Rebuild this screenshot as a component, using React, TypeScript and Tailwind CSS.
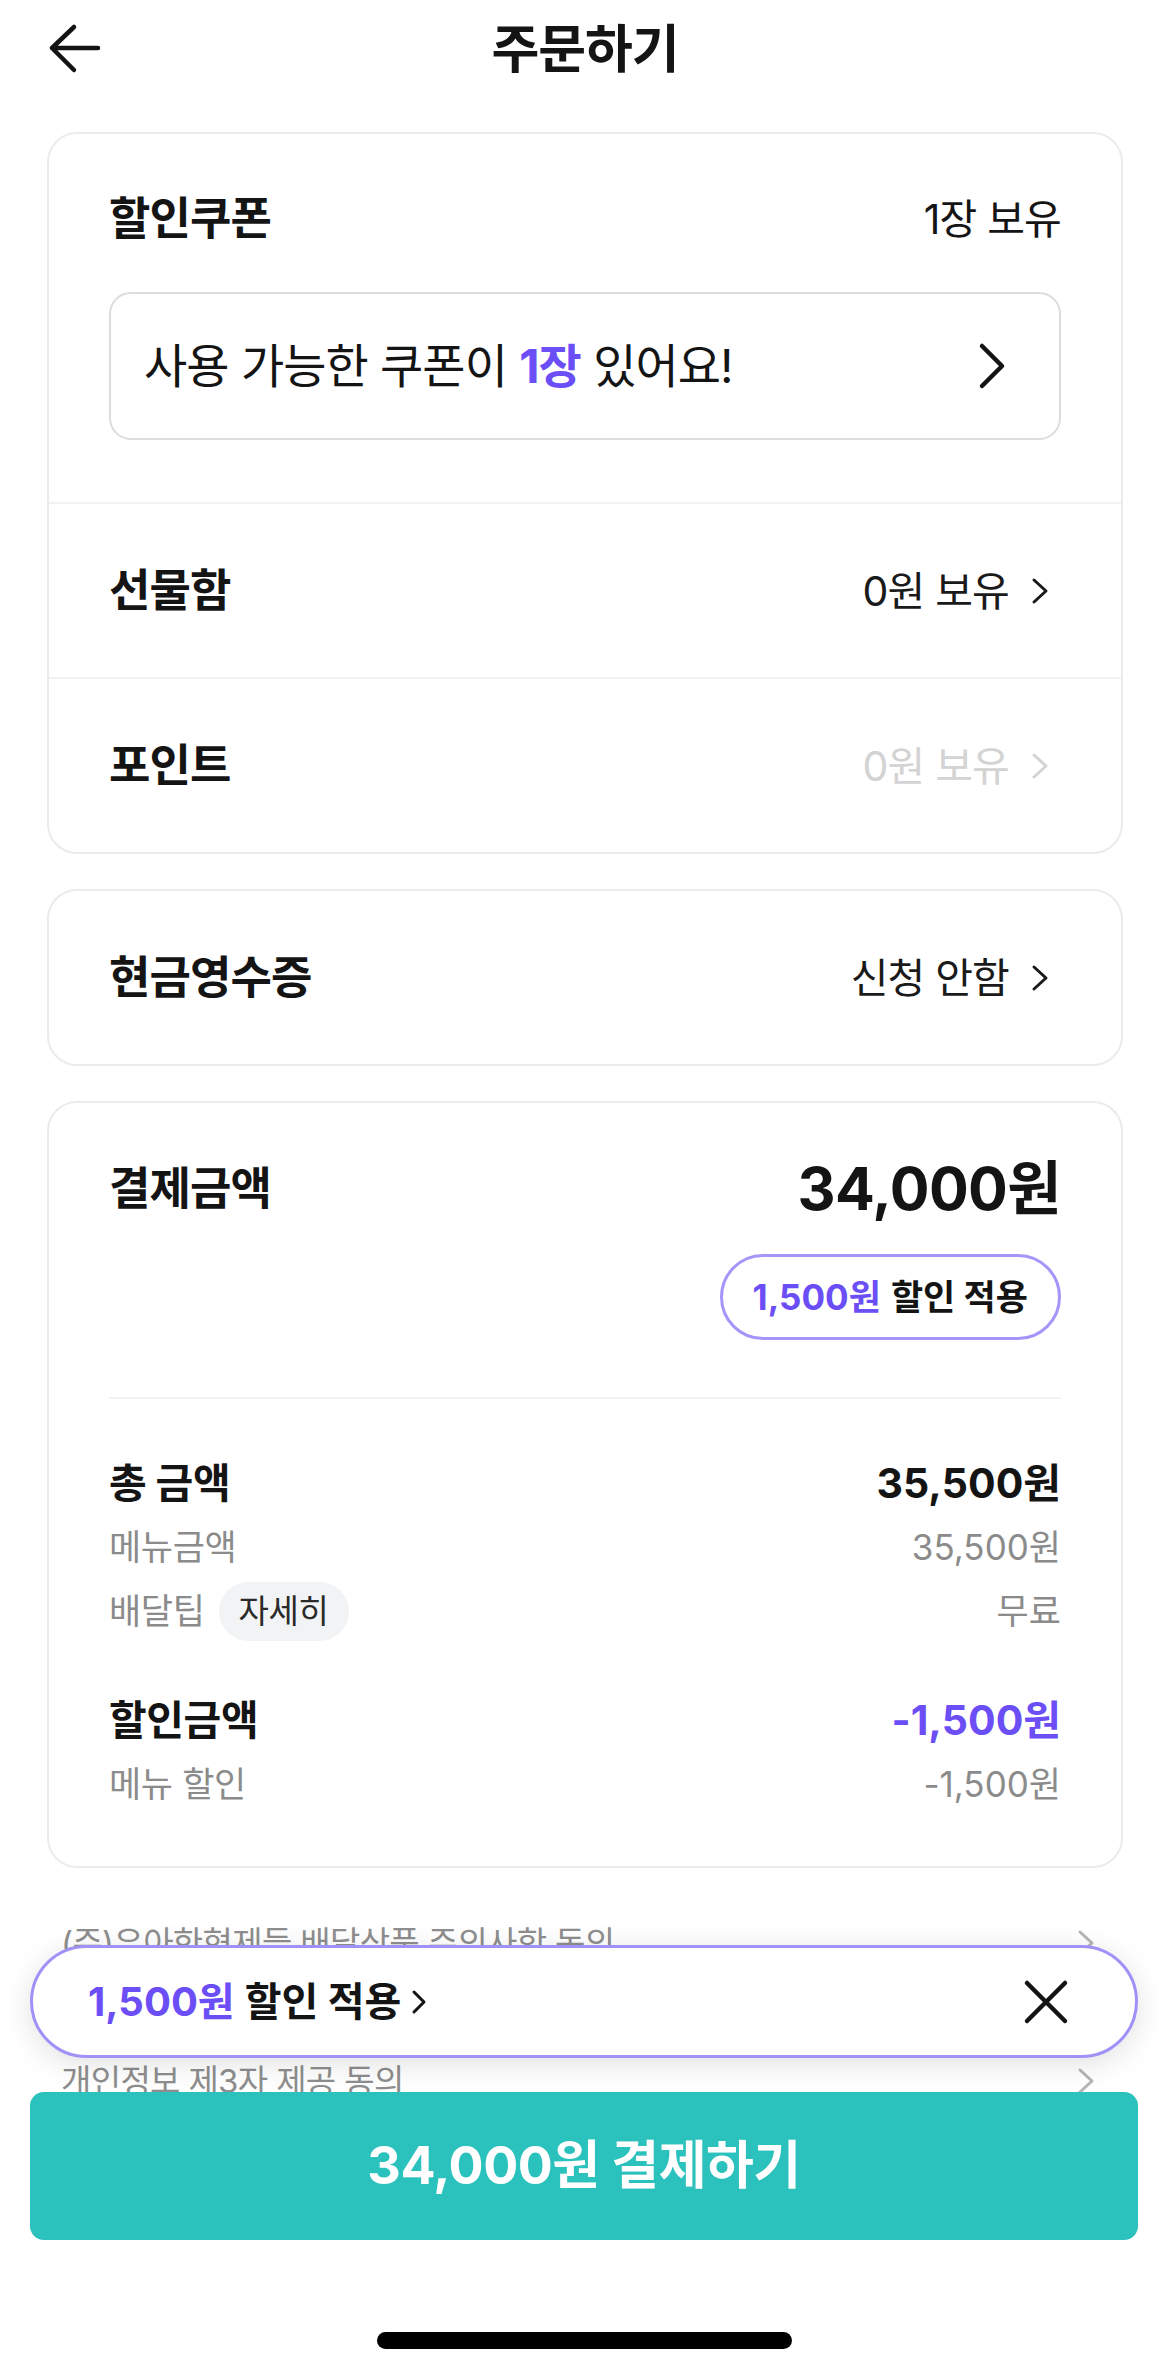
import type { ReactNode } from 'react';

function Chevron({ className = '' }: { className?: string }) {
  return (
    <svg width="18" height="28" viewBox="0 0 18 28" fill="none" className={className}>
      <path d="M3 3 L15 14 L3 25" stroke="currentColor" strokeWidth="3" strokeLinecap="round" strokeLinejoin="round" />
    </svg>
  );
}

function Row({ label, value, muted = false }: { label: string; value: string; muted?: boolean }) {
  return (
    <div className="flex h-[173px] items-center justify-between pl-[60px] pr-[72px]">
      <span className="text-[45px] font-bold leading-[52px] tracking-[-0.02em]">{label}</span>
      <div className={`flex items-center gap-[22px] ${muted ? 'text-[#d3d3d3]' : 'text-[#1a1a1a]'}`}>
        <span className="text-[41px] leading-[48px] tracking-[-0.02em]">{value}</span>
        <Chevron />
      </div>
    </div>
  );
}

function Line({ left, right, bold = false, accent = false }: { left: ReactNode; right: string; bold?: boolean; accent?: boolean }) {
  return (
    <div className="flex h-[64px] items-center justify-between">
      <div className={bold ? 'text-[41px] font-bold leading-[48px] tracking-[-0.01em]' : 'text-[35px] leading-[44px] tracking-[-0.01em] text-[#8b8b8b]'}>
        {left}
      </div>
      <span
        className={
          bold
            ? `text-[41px] font-bold leading-[48px] ${accent ? 'text-[#6b4ef5]' : ''}`
            : 'text-[35px] leading-[44px] text-[#8b8b8b]'
        }
      >
        {right}
      </span>
    </div>
  );
}

export default function App() {
  return (
    <div className="relative min-h-[2374px] overflow-hidden bg-white font-[Inter,'Noto_Sans_CJK_KR',sans-serif] text-[#141414]">
      <header className="relative flex h-[100px] items-center justify-center">
        <svg width="58" height="58" viewBox="0 0 58 58" fill="none" className="absolute left-[46px] top-[20px]">
          <path d="M6 28 H52 M6 28 L28 7 M6 28 L28 50" stroke="#141414" strokeWidth="4.5" strokeLinecap="round" strokeLinejoin="round" />
        </svg>
        <h1 className="text-[52px] font-bold leading-[60px] tracking-[-0.02em]">주문하기</h1>
      </header>

      <main className="flex flex-col gap-[35px] px-[47px] pt-[32px]">
        <section className="rounded-[30px] border-2 border-[#ebebeb]">
          <div className="px-[60px] pb-[62px] pt-[59px]">
            <div className="flex items-center justify-between">
              <span className="text-[45px] font-bold leading-[52px] tracking-[-0.02em]">할인쿠폰</span>
              <span className="text-[41px] leading-[48px] tracking-[-0.02em]">1장 보유</span>
            </div>
            <div className="mt-[47px] flex h-[148px] items-center justify-between rounded-[22px] border-2 border-[#dcdcdc] pl-[33px] pr-[53px]">
              <span className="text-[47px] leading-[54px] tracking-[-0.02em]">
                사용 가능한 쿠폰이 <span className="font-bold text-[#6b4ef5]">1장</span> 있어요!
              </span>
              <svg width="28" height="48" viewBox="0 0 28 48" fill="none">
                <path d="M4 4 L24 24 L4 44" stroke="#141414" strokeWidth="4.5" strokeLinecap="round" strokeLinejoin="round" />
              </svg>
            </div>
          </div>
          <div className="border-t-2 border-[#f2f2f2]">
            <Row label="선물함" value="0원 보유" />
          </div>
          <div className="border-t-2 border-[#f2f2f2]">
            <Row label="포인트" value="0원 보유" muted />
          </div>
        </section>

        <section className="rounded-[30px] border-2 border-[#ebebeb]">
          <Row label="현금영수증" value="신청 안함" />
        </section>

        <section className="rounded-[30px] border-2 border-[#ebebeb] px-[60px] pb-[50px] pt-[54px]">
          <div className="flex h-[64px] items-center justify-between">
            <span className="text-[45px] font-bold leading-[52px] tracking-[-0.02em]">결제금액</span>
            <span className="text-[59px] font-bold leading-[64px] tracking-[-0.01em]">34,000원</span>
          </div>
          <div className="mt-[33px] flex justify-end">
            <div className="flex h-[86px] items-center rounded-full border-[3px] border-[#a496f8] px-[30px] text-[35px] font-bold leading-[42px]">
              <span className="text-[#6b4ef5]">1,500원</span>
              <span className="ml-[10px]">할인 적용</span>
            </div>
          </div>
          <div className="mt-[57px] border-t-2 border-[#f2f2f2]" />
          <div className="mt-[52px]">
            <Line left="총 금액" right="35,500원" bold />
            <Line left="메뉴금액" right="35,500원" />
            <Line
              left={
                <div className="flex items-center gap-[14px]">
                  <span>배달팁</span>
                  <span className="flex h-[59px] items-center rounded-full bg-[#f2f3f5] px-[20px] text-[33px] text-[#2a2a2a]">자세히</span>
                </div>
              }
              right="무료"
            />
          </div>
          <div className="mt-[45px]">
            <Line left="할인금액" right="-1,500원" bold accent />
            <Line left="메뉴 할인" right="-1,500원" />
          </div>
        </section>
      </main>

      <div className="mt-[6px] flex flex-col pl-[61px] pr-[75px] text-[#8e8e8e]">
        <div className="flex h-[138px] items-center justify-between">
          <span className="text-[33px] leading-[42px] tracking-[-0.02em]">(주)우아한형제들 배달상품 주의사항 동의</span>
          <Chevron className="text-[#b5b5b5]" />
        </div>
        <div className="flex h-[138px] items-center justify-between">
          <span className="text-[33px] leading-[42px] tracking-[-0.02em]">개인정보 제3자 제공 동의</span>
          <Chevron className="text-[#b5b5b5]" />
        </div>
      </div>

      <div className="absolute bottom-[316px] left-[30px] right-[32px] flex h-[113px] items-center justify-between rounded-full border-[3px] border-[#9f92f7] bg-white pl-[55px] pr-[66px] shadow-[0_6px_30px_rgba(0,0,0,0.12)]">
        <div className="flex items-center text-[40px] font-bold leading-[48px]">
          <span className="text-[#6b4ef5]">1,500원</span>
          <span className="ml-[10px]">할인 적용</span>
          <svg width="16" height="26" viewBox="0 0 16 26" fill="none" className="ml-[10px]">
            <path d="M3 3 L13 13 L3 23" stroke="#141414" strokeWidth="3" strokeLinecap="round" strokeLinejoin="round" />
          </svg>
        </div>
        <svg width="46" height="46" viewBox="0 0 46 46" fill="none">
          <path d="M4 4 L42 42 M42 4 L4 42" stroke="#141414" strokeWidth="4.5" strokeLinecap="round" />
        </svg>
      </div>

      <div className="absolute bottom-0 left-0 right-0 flex h-[282px] flex-col items-center bg-white pl-[30px] pr-[32px]">
        <button className="flex h-[148px] w-full items-center justify-center rounded-[14px] bg-[#2bc1bc] text-[52px] font-bold leading-[60px] tracking-[-0.01em] text-white">
          34,000원 결제하기
        </button>
        <div className="mt-[92px] h-[17px] w-[415px] rounded-full bg-black" />
      </div>
    </div>
  );
}
